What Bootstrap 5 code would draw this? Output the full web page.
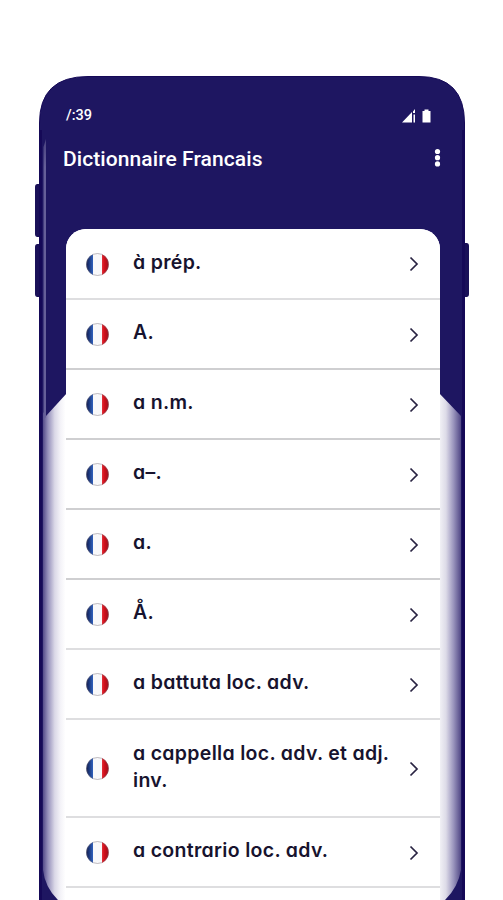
<!DOCTYPE html>
<html lang="fr">
<head>
<meta charset="utf-8">
<meta name="viewport" content="width=device-width, initial-scale=1">
<title>Dictionnaire Francais</title>
<link href="https://cdn.jsdelivr.net/npm/bootstrap@5.3.0/dist/css/bootstrap.min.css" rel="stylesheet">
<style>
body{height:900px;background:#fff;padding:76px 38px 0 39px}
.phone{height:824px;font-family:Roboto,sans-serif}
.shell{left:-5px;top:-1px;width:436px;height:825px}
.statusbar{height:53px;padding:29px 33px 0 27px;font-size:14.5px;line-height:21px;font-weight:500}
.titlebar{height:100px;padding:15px 23px 0 24px}
.titlebar h1{font-size:21px;line-height:30px;font-weight:500;letter-spacing:.08px;margin:0}
.words{margin:0 25px 0 27px;height:671px;border-radius:20px 20px 0 0;width:374px}
.entry{height:70px;padding:1px 21px 0 20px;border:0;border-bottom:2px solid #dedee0;border-radius:0!important;background:#fff;color:#17132e}
.entry.first{height:71px}
.entry.crisp{border-bottom-color:#cfcfd1}
.entry.tall{height:98px}
.label{width:268px;margin-left:24px;margin-top:-4px;font-family:Inter,sans-serif;font-feature-settings:"cv11";font-weight:600;font-size:19.5px;line-height:27px;letter-spacing:.31px}
.flag{width:23px;height:23px}
.chev{width:10px;height:16px}
</style>
<script src="https://cdn.jsdelivr.net/npm/bootstrap@5.3.0/dist/js/bootstrap.bundle.min.js"></script>
</head>
<body class="overflow-hidden">
<svg width="0" height="0" class="position-absolute">
<defs>
<linearGradient id="blue"><stop offset="0" stop-color="#0c1748"/><stop offset="1" stop-color="#2f60bd"/></linearGradient>
<linearGradient id="red"><stop offset="0" stop-color="#e33038"/><stop offset=".3" stop-color="#d3101c"/><stop offset="1" stop-color="#9a0a18"/></linearGradient>
<clipPath id="disc"><circle cx="11.5" cy="11.5" r="11.2"/></clipPath>
<symbol id="flag" viewBox="0 0 23 23"><g clip-path="url(#disc)"><path fill="#f8f8fa" d="M0 0h23v23H0z"/><path fill="url(#blue)" d="M0 0h7v23H0z"/><path fill="url(#red)" d="M16 0h7v23h-7z"/></g><circle cx="11.5" cy="11.5" r="11" fill="none" stroke="#776f78" stroke-opacity=".5" stroke-width=".9"/></symbol>
<symbol id="chev" viewBox="0 0 10 16"><path d="M1.500 1.500 8 8l-6.500 6.500" fill="none" stroke="#292342" stroke-width="1.700"/></symbol>
</defs>
</svg>
<main class="phone position-relative">
<svg class="shell position-absolute" viewBox="34 75 436 825" aria-hidden="true">
<defs>
<linearGradient id="edge" gradientUnits="userSpaceOnUse" x1="43" y1="0" x2="461" y2="0"><stop offset="0" stop-color="#544b8a"/><stop offset=".012" stop-color="#9691bb"/><stop offset=".028" stop-color="#dad8e7"/><stop offset=".042" stop-color="#f4f3f8"/><stop offset=".054" stop-color="#fff"/><stop offset=".946" stop-color="#f6f6f9"/><stop offset=".964" stop-color="#dddbe8"/><stop offset=".982" stop-color="#9a95bd"/><stop offset="1" stop-color="#514886"/></linearGradient>
<linearGradient id="shine" x1="0" y1="0" x2="0" y2="1"><stop offset="0" stop-color="#48417f"/><stop offset=".1" stop-color="#655f98"/><stop offset="1" stop-color="#655f98"/></linearGradient>
</defs>
<path fill="#1a1158" d="M40 184h-2.500q-2.500 0-2.500 3v47q0 3 2.500 3H40zm0 60h-2.500q-2.500 0-2.500 3v47q0 3 2.500 3H40zM464 243h2.500q2.500 0 2.500 3v48q0 3-2.500 3H464z"/>
<path fill="#1e1661" stroke="#150957" d="M39.500 902V123Q39.500 76.500 88 76.500H419Q464.500 76.500 464.500 123V902z"/>
<path fill="url(#edge)" d="M43 412 46 416 67 393H439L461 416V870Q458 888 444 901H59Q45 888 43 870z"/>
<path fill="url(#shine)" d="M43.500 147 46 139V417L43.500 420z"/>
<path fill="#150957" d="M39 130h3v770h-3zM462 130h3v770h-3z"/>
</svg>
<div class="position-relative">
<div class="statusbar d-flex justify-content-between text-white">
<span>/:39</span>
<svg width="31" height="16" viewBox="0 0 31 16" class="mt-1 me-n1"><g transform="translate(0 -1)"><path fill="#fff" d="M1 14.500 11 4v10.500zM12 3.500 14 1v4h-2zM12.500 6.500H14v8h-1.500zM21.500 3H23.500V1.500h4V3h2v11.500h-8z"/></g></svg>
</div>
<header class="titlebar d-flex justify-content-between text-white">
<h1>Dictionnaire Francais</h1>
<svg width="8" height="20" viewBox="0 0 8 20" class="mt-1" fill="#fff"><circle cx="3.500" cy="3.500" r="2.600"/><circle cx="3.500" cy="9.700" r="2.600"/><circle cx="3.500" cy="15.900" r="2.600"/></svg>
</header>
<div class="words list-group overflow-hidden bg-white">
<div class="entry first list-group-item d-flex align-items-center"><svg class="flag flex-shrink-0"><use href="#flag"/></svg><div class="label">à prép.</div><svg class="chev ms-auto"><use href="#chev"/></svg></div>
<div class="entry crisp list-group-item d-flex align-items-center"><svg class="flag flex-shrink-0"><use href="#flag"/></svg><div class="label">A.</div><svg class="chev ms-auto"><use href="#chev"/></svg></div>
<div class="entry crisp list-group-item d-flex align-items-center"><svg class="flag flex-shrink-0"><use href="#flag"/></svg><div class="label">a n.m.</div><svg class="chev ms-auto"><use href="#chev"/></svg></div>
<div class="entry crisp list-group-item d-flex align-items-center"><svg class="flag flex-shrink-0"><use href="#flag"/></svg><div class="label">a–.</div><svg class="chev ms-auto"><use href="#chev"/></svg></div>
<div class="entry crisp list-group-item d-flex align-items-center"><svg class="flag flex-shrink-0"><use href="#flag"/></svg><div class="label">a.</div><svg class="chev ms-auto"><use href="#chev"/></svg></div>
<div class="entry list-group-item d-flex align-items-center"><svg class="flag flex-shrink-0"><use href="#flag"/></svg><div class="label">Å.</div><svg class="chev ms-auto"><use href="#chev"/></svg></div>
<div class="entry list-group-item d-flex align-items-center"><svg class="flag flex-shrink-0"><use href="#flag"/></svg><div class="label">a battuta loc. adv.</div><svg class="chev ms-auto"><use href="#chev"/></svg></div>
<div class="entry tall list-group-item d-flex align-items-center"><svg class="flag flex-shrink-0"><use href="#flag"/></svg><div class="label">a cappella loc. adv. et adj. inv.</div><svg class="chev ms-auto"><use href="#chev"/></svg></div>
<div class="entry list-group-item d-flex align-items-center"><svg class="flag flex-shrink-0"><use href="#flag"/></svg><div class="label">a contrario loc. adv.</div><svg class="chev ms-auto"><use href="#chev"/></svg></div>
</div>
</div>
</main>
</body>
</html>
